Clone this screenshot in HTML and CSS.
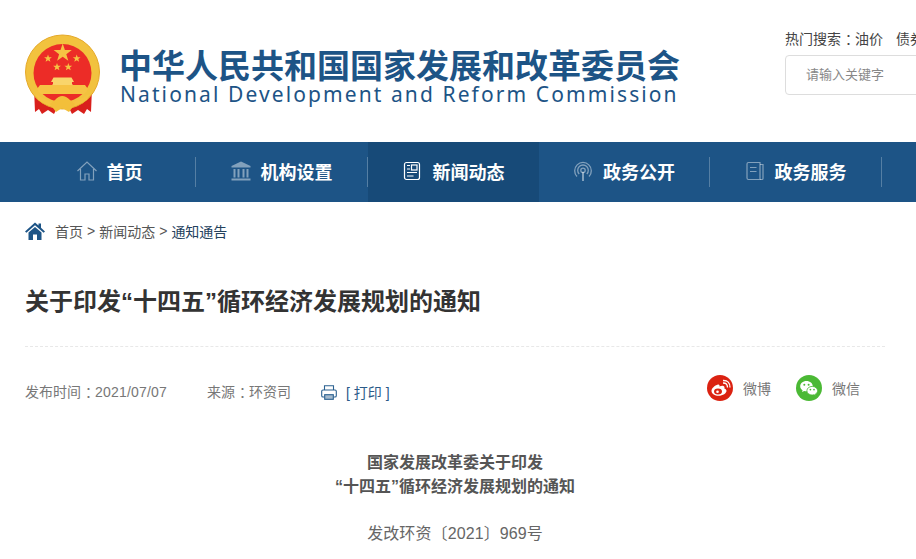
FILE: index.html
```html
<!DOCTYPE html>
<html lang="zh-CN">

<head>
    <meta charset="utf-8">
    <meta name="viewport" content="width=device-width, initial-scale=1.0">
    <title>关于印发“十四五”循环经济发展规划的通知</title>
    <link rel="stylesheet" href="styles.css">
</head>

<body>
    <header class="top">
        <div class="brand">
            <svg class="emblem" viewBox="10 6 76 80" width="76" height="80">
                <path d="M19 60 L32 64 L44 76 L39 86 L33 82 L27 86 L24 81 L20 84 Z" fill="#d9201c"/>
                <path d="M77 60 L64 64 L52 76 L57 86 L63 82 L69 86 L72 81 L76 84 Z" fill="#d9201c"/>
                <circle cx="47.5" cy="44" r="37" fill="#f2c23e"/>
                <circle cx="47.5" cy="44" r="37" fill="none" stroke="#e5a92a" stroke-width="1"/>
                <circle cx="47.5" cy="45" r="29" fill="#ec2c27"/>
                <polygon fill="#f6c344" points="47.7,15.5 49.9,22 56.8,22 51.3,26.2 53.3,32.8 47.7,28.8 42.1,32.8 44.1,26.2 38.6,22 45.5,22"/>
                <polygon fill="#f6c344" points="33,26.5 34,29.2 36.9,29.2 34.6,31 35.4,33.8 33,32.2 30.6,33.8 31.4,31 29.1,29.2 32,29.2"/>
                <polygon fill="#f6c344" points="61.7,26.5 62.7,29.2 65.6,29.2 63.3,31 64.1,33.8 61.7,32.2 59.3,33.8 60.1,31 57.8,29.2 60.7,29.2"/>
                <polygon fill="#f6c344" points="42,35 43,37.7 45.9,37.7 43.6,39.5 44.4,42.3 42,40.7 39.6,42.3 40.4,39.5 38.1,37.7 41,37.7"/>
                <polygon fill="#f6c344" points="53.3,35 54.3,37.7 57.2,37.7 54.9,39.5 55.7,42.3 53.3,40.7 50.9,42.3 51.7,39.5 49.4,37.7 52.4,37.7"/>
                <path d="M36 54 L38.5 49.5 H56.5 L59 54 H57 V56 L61 60 H34 L38 56 V54 Z" fill="#f9d56b"/>
                <path d="M25 57 H70 L73 61 Q71 65 69 66 H26 Q24 65 22 61 Z" fill="#f6c344"/>
                <path d="M21 66 Q47 84 74 66 L72 72 Q47 88 23 72 Z" fill="#f5c340"/>
                <path d="M40 72 Q47 64 55 72 L60 76 L54 84 L47 80 L41 84 L35 76 Z" fill="#f3bf3a"/>
            </svg>
            <div class="brand-text">
                <div class="brand-cn">中华人民共和国国家发展和改革委员会</div>
                <div class="brand-en">National Development and Reform Commission</div>
            </div>
        </div>
        <div class="search">
            <p class="hot">热门搜索<span class="colon">：</span><span class="hot-word">油价</span><span class="hot-word">债券</span></p>
            <div class="search-box">请输入关键字</div>
        </div>
    </header>

    <nav class="nav">
        <a class="nav-item">
            <svg class="nav-icon" viewBox="0 0 20 20" width="20" height="20" fill="none" stroke="currentColor" stroke-width="1.2">
                <path d="M0.5 10 L10 1 L19.5 10"/>
                <path d="M3.5 8 V19 H8 V13 H12 V19 H16.5 V8"/>
            </svg>
            <span>首页</span>
        </a>
        <a class="nav-item">
            <svg class="nav-icon" viewBox="0 0 20 20" width="20" height="20" fill="currentColor">
                <path d="M10 0.5 L19.5 5 V6.5 H0.5 V5 Z"/>
                <rect x="2.5" y="8" width="2" height="8.5"/>
                <rect x="6.5" y="8" width="2" height="8.5"/>
                <rect x="11.5" y="8" width="2" height="8.5"/>
                <rect x="15.5" y="8" width="2" height="8.5"/>
                <rect x="0.5" y="17.5" width="19" height="2"/>
            </svg>
            <span>机构设置</span>
        </a>
        <a class="nav-item active">
            <svg class="nav-icon" viewBox="0 0 20 20" width="20" height="20" fill="none" stroke="currentColor" stroke-width="1.2">
                <rect x="1.5" y="1.5" width="15" height="17" rx="2"/>
                <rect x="8.5" y="4" width="5.5" height="5"/>
                <path d="M4 4.5 H7 M4 8 H7 M4 11.5 H14 M4 15 H10.5"/>
            </svg>
            <span>新闻动态</span>
        </a>
        <a class="nav-item">
            <svg class="nav-icon" viewBox="0 0 20 20" width="20" height="20" fill="none" stroke="currentColor" stroke-width="1.3">
                <path d="M4 15.5 A8.3 8.3 0 1 1 16 15.5"/>
                <path d="M6.2 13 A5.3 5.3 0 1 1 13.8 13"/>
                <circle cx="10" cy="9.3" r="2.2"/>
                <path d="M10 11 V20" stroke-width="2"/>
            </svg>
            <span>政务公开</span>
        </a>
        <a class="nav-item">
            <svg class="nav-icon" viewBox="0 0 20 20" width="20" height="20" fill="none" stroke="currentColor" stroke-width="1.2">
                <path d="M15 1.5 H3.5 Q2 1.5 2 3 V17 Q2 18.5 3.5 18.5 H15 Z"/>
                <path d="M15 3.5 H18 V17.5 Q18 18.5 17 18.5 H15"/>
                <path d="M5 6.5 H11.5 M5 10.5 H11.5"/>
            </svg>
            <span>政务服务</span>
        </a>
    </nav>

    <main class="content">
        <div class="crumbs">
            <svg class="crumb-home" viewBox="0 0 20 18" width="20" height="18">
                <path d="M10 0.5 L13.5 3.6 V1.5 H16 V5.8 L20 9.4 L18.6 10.8 L10 3.3 L1.4 10.8 L0 9.4 Z" fill="#1d5486"/>
                <path d="M3.5 10.6 L10 5 L16.5 10.6 V18 H12 V12.5 H8 V18 H3.5 Z" fill="#1d5486"/>
            </svg>
            <span>首页</span><span class="sep">&gt;</span><span>新闻动态</span><span class="sep">&gt;</span><span class="crumb-now">通知通告</span>
        </div>

        <h1 class="title">关于印发“十四五”循环经济发展规划的通知</h1>

        <div class="meta">
            <span>发布时间<span class="colon">：</span><span class="date">2021/07/07</span></span>
            <span class="source">来源<span class="colon">：</span>环资司</span>
            <a class="print">
                <svg class="print-icon" viewBox="0 0 16 15" width="16" height="15" fill="none" stroke="#2a6090" stroke-width="1.1">
                    <path d="M3.5 5 V0.7 H12.5 V5"/>
                    <path d="M3.5 12 H2 Q0.7 12 0.7 10.7 V6.3 Q0.7 5 2 5 H14 Q15.3 5 15.3 6.3 V10.7 Q15.3 12 14 12 H12.5"/>
                    <rect x="3.7" y="9.7" width="8.6" height="4.6" fill="#a5bacd"/>
                </svg>
                <span class="print-text">[ 打印 ]</span>
            </a>
            <div class="share">
                <a class="share-link">
                    <svg viewBox="0 0 26 26" width="26" height="26">
                        <circle cx="13" cy="13" r="13" fill="#db2211"/>
                        <path d="M11 9.5 C7.5 10.5 4.5 13.5 4.5 16 C4.5 19 8 20.8 11.5 20.8 C16 20.8 19.5 18.3 19.5 15.8 C19.5 14.4 18.2 13.8 17.3 13.5 C17.8 12.2 17.5 11.4 16.5 11 C15.3 10.6 13.5 11 12.5 11.6 C12.8 10.4 12.4 9.2 11 9.5 Z" fill="#fff"/>
                        <ellipse cx="11" cy="16.5" rx="4" ry="3" fill="#db2211"/>
                        <circle cx="10.5" cy="16.7" r="1.3" fill="#fff"/>
                        <path d="M16 8 Q20.5 7.8 20.5 12.5 M16 5.5 Q23 5.2 23 12.5" fill="none" stroke="#fff" stroke-width="1.3"/>
                    </svg>
                    微博
                </a>
                <a class="share-link">
                    <svg viewBox="0 0 26 26" width="26" height="26">
                        <circle cx="13" cy="13" r="13" fill="#4bb935"/>
                        <path d="M10.5 6 C6.9 6 4.2 8.3 4.2 11.2 C4.2 12.9 5.1 14.2 6.6 15.2 L6 17 L8.2 15.9 C8.9 16.1 9.6 16.3 10.5 16.3 C14 16.3 16.8 14 16.8 11.2 C16.8 8.3 14 6 10.5 6 Z" fill="#fff"/>
                        <circle cx="8.3" cy="9.8" r="1" fill="#4bb935"/>
                        <circle cx="12.6" cy="9.8" r="1" fill="#4bb935"/>
                        <path d="M16.2 11.4 C13.2 11.4 10.9 13.3 10.9 15.7 C10.9 18.1 13.2 20 16.2 20 C16.9 20 17.5 19.9 18.1 19.7 L19.9 20.6 L19.4 19.1 C20.8 18.2 21.6 17 21.6 15.7 C21.6 13.3 19.2 11.4 16.2 11.4 Z" fill="#fff" stroke="#4bb935" stroke-width="0.8"/>
                        <circle cx="14.4" cy="14.6" r=".85" fill="#4bb935"/>
                        <circle cx="18" cy="14.6" r=".85" fill="#4bb935"/>
                    </svg>
                    微信
                </a>
            </div>
        </div>

        <div class="article">
            <p class="doc-title">国家发展改革委关于印发<br>“十四五”循环经济发展规划的通知</p>
            <p class="doc-no">发改环资〔2021〕969号</p>
        </div>
    </main>
</body>

</html>
```

FILE: styles.css
```css
* {
    box-sizing: border-box;
}

html,
body {
    overflow: hidden;
}

body {
    margin: 0;
    width: 1200px;
    background: #fff;
    color: #333;
    font-family: "Liberation Sans", "Noto Sans CJK SC", sans-serif;
}

p,
h1 {
    margin: 0;
}

/* full width colon sits in the middle of its box in the original */
.colon {
    padding-left: 4px;
    letter-spacing: -4px;
}

.top {
    display: flex;
    justify-content: space-between;
    height: 142px;
    padding: 27px 0 0 25px;
}

.brand {
    display: flex;
    align-items: flex-start;
    gap: 18px;
}

.emblem {
    margin-top: 7px;
}

.brand-text {
    padding-top: 25px;
    color: #1d5486;
}

.brand-cn {
    font-size: 33px;
    line-height: 30px;
    font-weight: bold;
    white-space: nowrap;
}

.brand-en {
    margin-left: 1px;
    font-family: "Noto Sans", sans-serif;
    font-size: 21px;
    line-height: 24px;
    letter-spacing: 2.1px;
    white-space: nowrap;
}

.search {
    width: 415px;
}

.hot {
    font-size: 14px;
    line-height: 24px;
    color: #444;
}

.hot-word {
    margin-right: 13px;
}

.search-box {
    height: 40px;
    margin-top: 4px;
    padding-left: 20px;
    border: 1px solid #ddd;
    border-radius: 4px;
    font-size: 13px;
    line-height: 38px;
    color: #888;
}

.nav {
    display: flex;
    height: 60px;
    padding-left: 24px;
    background: #1d5486;
}

.nav-item {
    display: flex;
    align-items: center;
    justify-content: center;
    gap: 10px;
    width: 172px;
    height: 30px;
    margin-top: 15px;
    padding-bottom: 2px;
    border-right: 1px solid rgba(255, 255, 255, .25);
    color: #fff;
    font-size: 18px;
    font-weight: bold;
}

.nav-item.active {
    width: 171px;
    height: 60px;
    margin-top: 0;
    background: #174a78;
    border-right: 0;
}

.active + .nav-item {
    width: 171px;
}

.nav-icon {
    color: rgba(255, 255, 255, .45);
}

.active .nav-icon {
    color: #fff;
}

.content {
    width: 860px;
    margin-left: 25px;
}

.crumbs {
    display: flex;
    align-items: center;
    height: 20px;
    margin-top: 19px;
    font-size: 14px;
    color: #555;
}

.crumb-home {
    margin-right: 10px;
}

.sep {
    margin: 0 4px;
}

.crumb-now {
    color: #24415c;
}

.title {
    margin-top: 41px;
    padding-bottom: 24px;
    border-bottom: 1px dashed #e8e8e8;
    font-size: 24px;
    line-height: 40px;
    color: #333;
}

.meta {
    display: flex;
    align-items: center;
    height: 26px;
    margin-top: 31px;
    font-size: 14px;
    color: #777;
}

.date {
    letter-spacing: .2px;
}

.source {
    margin-left: 40px;
}

.print {
    display: flex;
    align-items: center;
    gap: 9px;
    margin-left: 30px;
    color: #1d5486;
}

.print-icon {
    margin-top: 3px;
}

.print-text {
    margin-top: 2px;
    color: #2b5a88;
}

.share {
    display: flex;
    gap: 25px;
    margin-left: auto;
    margin-right: 25px;
    margin-bottom: 6px;
}

.share-link {
    display: flex;
    align-items: center;
    gap: 10px;
}

.article {
    margin-top: 47px;
    text-align: center;
    font-size: 16px;
    color: #666;
}

.doc-title {
    font-weight: bold;
    line-height: 24px;
    color: #555;
}

.doc-no {
    margin-top: 23px;
    line-height: 24px;
    letter-spacing: .1px;
}
```
